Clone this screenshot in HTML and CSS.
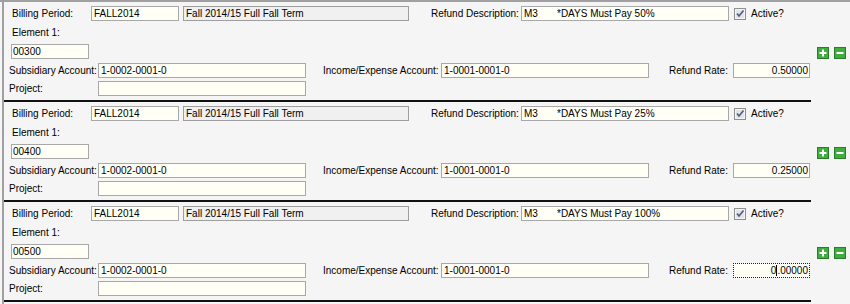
FILE: index.html
```html
<!DOCTYPE html>
<html>
    <head>
        <title>Refund Schedule</title>
        <link rel="stylesheet" href="styles.css">
    </head>
    <body>
        <div class="frame">
            <div class="panel">
                <div class="row">
                    <span class="lbl bp">Billing Period:</span>
                    <span class="fld w88">FALL2014</span>
                    <span class="fld off term">Fall 2014/15 Full Fall Term</span>
                    <span class="lbl rd">Refund Description:</span>
                    <span class="fld w208"><span class="code">M3</span>*DAYS Must Pay 50%</span>
                    <span class="chk"><svg width="12" height="12" viewBox="0 0 12 12"><rect x="0.5" y="0.5" width="11" height="11" fill="#e4e4e4" stroke="#8e8f8f"/><rect x="1.5" y="1.5" width="9" height="9" fill="none" stroke="#f4f4f4"/><path d="M3 5.5 L5 8 L9.5 2.5" fill="none" stroke="#4a5c86" stroke-width="1.6"/></svg></span>
                    <span class="lbl active">Active?</span>
                </div>
                <div class="row tall"><span class="lbl el">Element 1:</span></div>
                <div class="row">
                    <span class="fld elem">00300</span>
                    <span class="btns">
                        <svg width="12" height="12" viewBox="0 0 12 12"><rect x="0.5" y="0.5" width="11" height="11" fill="#3fae3f" stroke="#2b7d2b"/><path d="M6 2.5 V9.5 M2.5 6 H9.5" stroke="#fff" stroke-width="2"/></svg>
                        <svg width="12" height="12" viewBox="0 0 12 12"><rect x="0.5" y="0.5" width="11" height="11" fill="#3fae3f" stroke="#2b7d2b"/><path d="M2.5 6 H9.5" stroke="#fff" stroke-width="2"/></svg>
                    </span>
                </div>
                <div class="row gap4">
                    <span class="lbl sa">Subsidiary Account:</span>
                    <span class="fld w208">1-0002-0001-0</span>
                    <span class="lbl ie">Income/Expense Account:</span>
                    <span class="fld w208">1-0001-0001-0</span>
                    <span class="lbl rr">Refund Rate:</span>
                    <span class="fld rate">0.50000</span>
                </div>
                <div class="row gap3">
                    <span class="lbl sa">Project:</span>
                    <span class="fld w208"></span>
                </div>
                <div class="sep"></div>
            </div>

            <div class="panel">
                <div class="row">
                    <span class="lbl bp">Billing Period:</span>
                    <span class="fld w88">FALL2014</span>
                    <span class="fld off term">Fall 2014/15 Full Fall Term</span>
                    <span class="lbl rd">Refund Description:</span>
                    <span class="fld w208"><span class="code">M3</span>*DAYS Must Pay 25%</span>
                    <span class="chk"><svg width="12" height="12" viewBox="0 0 12 12"><rect x="0.5" y="0.5" width="11" height="11" fill="#e4e4e4" stroke="#8e8f8f"/><rect x="1.5" y="1.5" width="9" height="9" fill="none" stroke="#f4f4f4"/><path d="M3 5.5 L5 8 L9.5 2.5" fill="none" stroke="#4a5c86" stroke-width="1.6"/></svg></span>
                    <span class="lbl active">Active?</span>
                </div>
                <div class="row tall"><span class="lbl el">Element 1:</span></div>
                <div class="row">
                    <span class="fld elem">00400</span>
                    <span class="btns">
                        <svg width="12" height="12" viewBox="0 0 12 12"><rect x="0.5" y="0.5" width="11" height="11" fill="#3fae3f" stroke="#2b7d2b"/><path d="M6 2.5 V9.5 M2.5 6 H9.5" stroke="#fff" stroke-width="2"/></svg>
                        <svg width="12" height="12" viewBox="0 0 12 12"><rect x="0.5" y="0.5" width="11" height="11" fill="#3fae3f" stroke="#2b7d2b"/><path d="M2.5 6 H9.5" stroke="#fff" stroke-width="2"/></svg>
                    </span>
                </div>
                <div class="row gap4">
                    <span class="lbl sa">Subsidiary Account:</span>
                    <span class="fld w208">1-0002-0001-0</span>
                    <span class="lbl ie">Income/Expense Account:</span>
                    <span class="fld w208">1-0001-0001-0</span>
                    <span class="lbl rr">Refund Rate:</span>
                    <span class="fld rate">0.25000</span>
                </div>
                <div class="row gap3">
                    <span class="lbl sa">Project:</span>
                    <span class="fld w208"></span>
                </div>
                <div class="sep"></div>
            </div>

            <div class="panel">
                <div class="row">
                    <span class="lbl bp">Billing Period:</span>
                    <span class="fld w88">FALL2014</span>
                    <span class="fld off term">Fall 2014/15 Full Fall Term</span>
                    <span class="lbl rd">Refund Description:</span>
                    <span class="fld w208"><span class="code">M3</span>*DAYS Must Pay 100%</span>
                    <span class="chk"><svg width="12" height="12" viewBox="0 0 12 12"><rect x="0.5" y="0.5" width="11" height="11" fill="#e4e4e4" stroke="#8e8f8f"/><rect x="1.5" y="1.5" width="9" height="9" fill="none" stroke="#f4f4f4"/><path d="M3 5.5 L5 8 L9.5 2.5" fill="none" stroke="#4a5c86" stroke-width="1.6"/></svg></span>
                    <span class="lbl active">Active?</span>
                </div>
                <div class="row tall"><span class="lbl el">Element 1:</span></div>
                <div class="row">
                    <span class="fld elem">00500</span>
                    <span class="btns">
                        <svg width="12" height="12" viewBox="0 0 12 12"><rect x="0.5" y="0.5" width="11" height="11" fill="#3fae3f" stroke="#2b7d2b"/><path d="M6 2.5 V9.5 M2.5 6 H9.5" stroke="#fff" stroke-width="2"/></svg>
                        <svg width="12" height="12" viewBox="0 0 12 12"><rect x="0.5" y="0.5" width="11" height="11" fill="#3fae3f" stroke="#2b7d2b"/><path d="M2.5 6 H9.5" stroke="#fff" stroke-width="2"/></svg>
                    </span>
                </div>
                <div class="row gap4">
                    <span class="lbl sa">Subsidiary Account:</span>
                    <span class="fld w208">1-0002-0001-0</span>
                    <span class="lbl ie">Income/Expense Account:</span>
                    <span class="fld w208">1-0001-0001-0</span>
                    <span class="lbl rr">Refund Rate:</span>
                    <span class="fld rate focus">0<span class="caret"></span>.00000</span>
                </div>
                <div class="row gap3">
                    <span class="lbl sa">Project:</span>
                    <span class="fld w208"></span>
                </div>
                <div class="sep"></div>
            </div>
        </div>
    </body>
</html>
```

FILE: styles.css
```css
* {
    box-sizing: border-box;
}
body {
    margin: 0;
    height: 304px;
    overflow: hidden;
    background: #f5f5f5;
    border-top: 2px solid #a0a0a0;
    font-family: "Liberation Sans", Arial, sans-serif;
    font-size: 10px;
    color: #000;
}
.frame {
    margin-left: 2px;
    border-left: 2px solid #a0a0a0;
    height: 302px;
}
.panel {
    height: 100px;
    padding-top: 4px;
}
.row {
    display: flex;
    align-items: center;
    height: 15px;
}
.row.tall {
    height: 23px;
}
.row.gap4 {
    margin-top: 4px;
}
.row.gap3 {
    margin-top: 3px;
}
.lbl {
    flex: none;
    white-space: nowrap;
    padding-bottom: 1px;
}
.bp {
    margin-left: 8px;
    width: 79px;
}
.rd {
    margin-left: 22px;
    width: 90px;
}
.active {
    margin-left: 5px;
}
.el {
    margin-left: 8px;
    padding-top: 1px;
}
.sa {
    margin-left: 5px;
    width: 89px;
}
.ie {
    margin-left: 17px;
    width: 118px;
}
.rr {
    margin-left: 20px;
    width: 64px;
}
.fld {
    flex: none;
    height: 15px;
    border: 1px solid #a8a8a8;
    background: #fffff6;
    padding: 0 2px;
    line-height: 13px;
    white-space: nowrap;
    overflow: hidden;
}
.fld.off {
    background: #f0f0f0;
    border-color: #9e9e9e;
}
.w88 {
    width: 88px;
}
.term {
    margin-left: 4px;
    width: 226px;
}
.w208 {
    width: 208px;
}
.elem {
    margin-left: 7px;
    width: 78px;
    padding-left: 1px;
}
.rate {
    width: 77px;
    text-align: right;
    padding-right: 1px;
}
.rate.focus {
    border: 1px dotted #222;
}
.caret {
    display: inline-block;
    width: 1px;
    height: 11px;
    background: #000;
    vertical-align: -2px;
}
.code {
    display: inline-block;
    width: 33px;
}
.chk {
    flex: none;
    margin-left: 5px;
    height: 12px;
    margin-top: 1px;
}
.chk svg, .btns svg {
    display: block;
}
.btns {
    margin-left: auto;
    margin-right: 4px;
    display: flex;
    gap: 5px;
    margin-top: 2px;
}
.sep {
    margin-top: 4px;
    width: 807px;
    height: 2px;
    background: #111;
}
```
